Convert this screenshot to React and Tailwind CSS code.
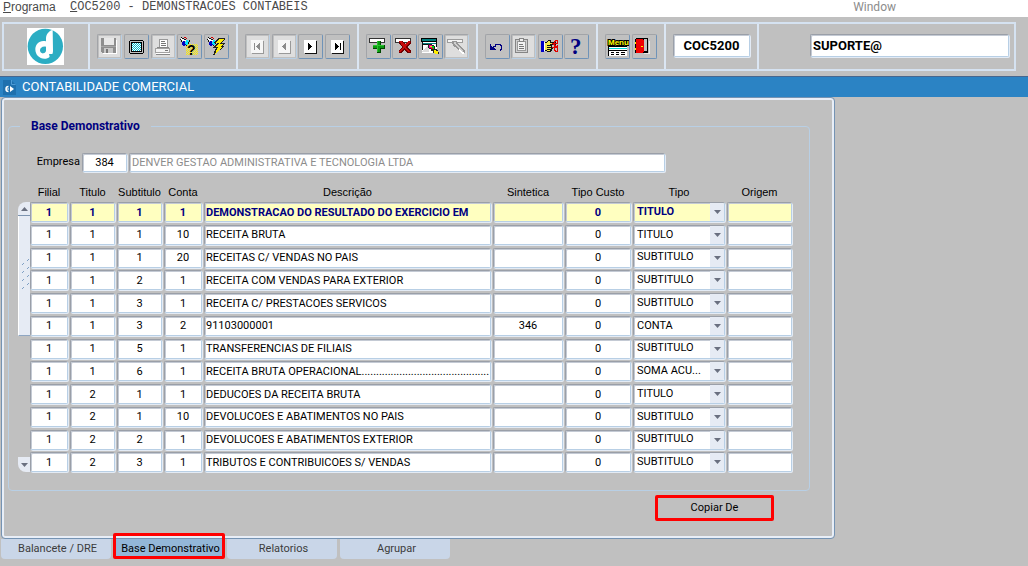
import React, { useState } from "react";

const rows = [
  ["1", "1", "1", "1", "DEMONSTRACAO DO RESULTADO DO EXERCICIO EM", "", "0", "TITULO", ""],
  ["1", "1", "1", "10", "RECEITA BRUTA", "", "0", "TITULO", ""],
  ["1", "1", "1", "20", "RECEITAS C/ VENDAS NO PAIS", "", "0", "SUBTITULO", ""],
  ["1", "1", "2", "1", "RECEITA COM VENDAS PARA EXTERIOR", "", "0", "SUBTITULO", ""],
  ["1", "1", "3", "1", "RECEITA C/ PRESTACOES SERVICOS", "", "0", "SUBTITULO", ""],
  ["1", "1", "3", "2", "91103000001", "346", "0", "CONTA", ""],
  ["1", "1", "5", "1", "TRANSFERENCIAS DE FILIAIS", "", "0", "SUBTITULO", ""],
  ["1", "1", "6", "1", "RECEITA BRUTA OPERACIONAL................................................", "", "0", "SOMA ACU...", ""],
  ["1", "2", "1", "1", "DEDUCOES DA RECEITA BRUTA", "", "0", "TITULO", ""],
  ["1", "2", "1", "10", "DEVOLUCOES E ABATIMENTOS NO PAIS", "", "0", "SUBTITULO", ""],
  ["1", "2", "2", "1", "DEVOLUCOES E ABATIMENTOS EXTERIOR", "", "0", "SUBTITULO", ""],
  ["1", "2", "3", "1", "TRIBUTOS E CONTRIBUICOES S/ VENDAS", "", "0", "SUBTITULO", ""],
];

const columns = [
  { name: "Filial", width: "w-[40px]" },
  { name: "Titulo", width: "w-[47px]" },
  { name: "Subtitulo", width: "w-[47px]" },
  { name: "Conta", width: "w-[40px]" },
  { name: "Descrição", width: "" },
  { name: "Sintetica", width: "w-[72px]" },
  { name: "Tipo Custo", width: "w-[68px]" },
  { name: "Tipo", width: "w-[94px]" },
  { name: "Origem", width: "w-[67px]" },
];

const field =
  "block w-full min-w-0 rounded-[2px] border border-t-[#9a9fa8] border-l-[#9a9fa8] border-r-[#b8cfe5] border-b-[#b8cfe5] shadow-[1px_1px_0_#e3ebf5,inset_1px_1px_0_#c4cad4] outline-none";

function Glyph({ children }) {
  return (
    <svg viewBox="0 0 24 25" width="24" height="25" shapeRendering="crispEdges" aria-hidden="true" className="block">
      {children}
    </svg>
  );
}

const Shade = () => <rect x="2" y="2" width="21" height="21" fill="#dedede" />;

const SaveIcon = () => (
  <Glyph>
    <Shade />
    <path d="M4 4h15v15h-14l-1-1z" fill="#8e8e8e" />
    <rect x="7" y="4" width="10" height="7" fill="#e8e8e8" />
    <rect x="4" y="12" width="15" height="1" fill="#a6a6a6" />
    <rect x="7" y="14" width="9" height="5" fill="#c9c9c9" />
    <rect x="9" y="15" width="2" height="4" fill="#777" />
    <path d="M6 19.500h13.500v-13.500" fill="none" stroke="#fff" />
  </Glyph>
);

const ScreenIcon = () => (
  <Glyph>
    <path d="M6 6h13v1h1v12h-1v1h-13v-1h-1v-12h1z" fill="#000" />
    <rect x="6" y="7" width="13" height="12" fill="#c0c0c0" />
    <rect x="7" y="8" width="11" height="10" fill="#000" />
    <rect x="8" y="9" width="9" height="8" fill="#fff" />
    {[0, 1, 2, 3, 4, 5, 6, 7].map((r) => (
      <path key={r} d={`M${8 + (r % 2)} ${9.5 + r}h${9 - (r % 2)}`} stroke="#00b6c8" strokeDasharray="1 1" />
    ))}
  </Glyph>
);

const PrinterIcon = () => (
  <Glyph>
    <Shade />
    <path d="M8.500 5.500h8v8h-8z" fill="#fff" stroke="#999" />
    <path d="M10 7.500h4M10 9.500h5M10 11.500h5" stroke="#777" />
    <path d="M4.500 14.500h14v4h-14z" fill="#f4f4f4" stroke="#a2a2a2" />
    <path d="M6 13.500h12M5 20.500h14" stroke="#888" />
    <path d="M5 19.500h14" stroke="#fff" />
    <path d="M14 16.500h3" stroke="#777" />
  </Glyph>
);

const Torch = () => (
  <>
    <path d="M4 4h2v1h2v1h1v1h-1v2h-1v-1h-1v-1h-1v-1h-1z" fill="#fff" />
    <path d="M4 3h1v1h-1zM5 4h2v1h-2zM7 5h2v1h-2zM3 5h1v1h-1zM4 6h1v2h-1zM12 6h1v2h-1zM13 8h-1v2h-1v1h-1v1h-1v-1h1v-1h1v-3h1z" fill="#111" />
    <path d="M5 8h1v-1h2v1h1v3h-1v1h-2v-1h-1z" fill="#0000c0" />
    <path d="M9 6h2v1h1v1h-1v3h-2v-1h-1v-2h1z" fill="#00e5ff" />
    <path d="M7 3h2v1h1v1h-1v-1h-2z" fill="#d00000" />
  </>
);

const QueryIcon = () => (
  <Glyph>
    {[0, 1, 2, 3, 4, 5, 6, 7, 8, 9, 10].map((r) => (
      <path key={r} d={`M${9 + (r % 2)} ${10.5 + r}h11`} stroke="#ffee00" strokeDasharray="1 1" />
    ))}
    <Torch />
    <text x="10" y="21" fontFamily="Liberation Sans" fontSize="14" fontWeight="700" fill="#000">
      ?
    </text>
  </Glyph>
);

const ExecuteIcon = () => (
  <Glyph>
    <Torch />
    <path d="M14 4h7v1l-3 4h3v1l-3 2h2v1l-4 3-6 5h-1l3-7h-3v-1l4-4h-3v-1z" fill="#222" />
    <path d="M15 5h5l-4 5h4l-4 3h3l-8 7 3-7h-3l4-4h-3z" fill="#ffee00" />
  </Glyph>
);

function NavIcon({ off, children }) {
  return (
    <Glyph>
      {off && <Shade />}
      <rect x="7" y="7" width="12" height="13" fill={off ? "#999" : "#111"} />
      <rect x="6" y="6" width="12" height="13" fill={off ? "#f6f6f6" : "#fff"} />
      <g fill={off ? "#8b8b8b" : "#000"}>{children}</g>
    </Glyph>
  );
}

const FirstIcon = () => (
  <NavIcon off>
    <path d="M9 9h1v7h-1zM15 9v7h-1v-1h-1v-1h-1v-1h-1v-1h1v-1h1v-1h1v-1z" />
  </NavIcon>
);
const PrevIcon = () => (
  <NavIcon off>
    <path d="M14 9v7h-1v-1h-1v-1h-1v-1h-1v-1h1v-1h1v-1h1v-1z" />
  </NavIcon>
);
const NextIcon = () => (
  <NavIcon>
    <path d="M10 9v7h1v-1h1v-1h1v-1h1v-1h-1v-1h-1v-1h-1v-1z" />
  </NavIcon>
);
const LastIcon = () => (
  <NavIcon>
    <path d="M15 9h1v7h-1zM10 9v7h1v-1h1v-1h1v-1h1v-1h-1v-1h-1v-1h-1v-1z" />
  </NavIcon>
);

const AddIcon = () => (
  <Glyph>
    <rect x="3.500" y="4.500" width="15" height="4" fill="#fff" stroke="#333" />
    <path d="M11 7h4v4h4v4h-4v4h-4v-4h-4v-4h4z" fill="#004800" />
    <path d="M11 7h3v4h4v3h-4v4h-3v-4h-4v-3h4z" fill="#0b9a12" />
    <path d="M11.500 7v11M7 11.500h11" stroke="#2bc32f" />
  </Glyph>
);

const RemoveIcon = () => (
  <Glyph>
    <rect x="3.500" y="4.500" width="15" height="4" fill="#fff" stroke="#333" />
    <path d="M7 7h4l2 3 3-3h3v2l-4 4 4 4v2h-4l-3-3-2 3h-3v-2l3-4-3-4z" fill="#6e0000" />
    <path d="M7 7h3l3 4 3-4h2v1l-4 5 4 5h-2l-4-4-3 4h-2v-1l4-4z" fill="#c80a0a" />
  </Glyph>
);

const ClearIcon = () => (
  <Glyph>
    <rect x="4" y="5" width="15" height="14" fill="#fff" />
    <path d="M3 4h16v4h-16z" fill="#000" />
    <path d="M4 5h14v2h-14z" fill="#007f7f" />
    <path d="M5 9h14v1h-14z" fill="#007f7f" />
    <path d="M4 8h1v8h-1zM5 10h5v1h-5zM18 8h1v5h-1z" fill="#111" />
    <path d="M4 18l5-6h2v6z" fill="#dcdcdc" />
    <path d="M10 10h4v1h2v1h1v3h2v1h1v2h1v2h-4v-1h-2v-2h-2v-2h-2v-1h-1z" fill="#222" />
    <path d="M11 11h3v3h-3z" fill="#f00090" />
    <path d="M12 12h2v1h-2z" fill="#ffe000" />
    <path d="M14 12h2v3h-2z" fill="#00d020" />
    <path d="M13 14h2v1h-2z" fill="#e00000" />
    <path d="M16 16h2v1h2v3h-3v-1h-1z" fill="#ffee00" />
  </Glyph>
);

const EraseIcon = () => (
  <Glyph>
    <Shade />
    <rect x="3.500" y="5.500" width="15" height="3" fill="#f4f4f4" stroke="#9b9b9b" />
    <path d="M8 7h5v1h1v2h1v1h1v1h1v1h1v1h1v1h1v1h1v3h-1v1h-2v-1h-1v-1h-1v-1h-1v-1h-1v-1h-1v-1h-1v-1h-2v-1h-1z" fill="#969696" />
    <path d="M10 8h2v2h1v1h1v1h1v1h1v1h1v1h1v1h1v2h-1v-1h-1v-1h-1v-1h-1v-1h-1v-1h-1v-1h-1v-1h-1v-1h-1z" fill="#cfcfcf" />
    <path d="M15.500 15v1h1v1h1v1h2v1h-2" fill="none" stroke="#fff" />
  </Glyph>
);

const UndoIcon = () => (
  <Glyph>
    <path d="M5 10v6h6v-1h-1v-1h-1v-1h-2v-1h-1v-2z" fill="#000080" />
    <path d="M8.500 13v-1h1.500v-1.500h5v1h1.500v4h-1v1.500" fill="none" stroke="#000080" />
  </Glyph>
);

const PasteIcon = () => (
  <Glyph>
    <Shade />
    <rect x="4.500" y="5.500" width="12" height="13" rx="1" fill="#d0d0d0" stroke="#858585" />
    <rect x="6.500" y="7.500" width="8" height="9" fill="#f2f2f2" stroke="#999" />
    <path d="M8.500 4.500h4v3h-4z" fill="#efefef" stroke="#858585" />
    <path d="M8 10.500h4M8 12.500h5M8 14.500h5" stroke="#777" />
  </Glyph>
);

const PointIcon = () => (
  <Glyph>
    <path d="M3 7h3v11h-3z" fill="#0000c8" />
    <path d="M6 8h1v9h-1z" fill="#fff" />
    <path d="M7 8h2v-1h1v-1h3v2h5v3h-4v2h1v2h-1v2h-1v1h-4v-1h-2z" fill="#111" />
    <path d="M7 9h2v-1h1v-1h2v2h5v1h-5v1h-3v1h4v1h-4v1h4v1h-4v1h3v1h-3v-1h-2z" fill="#f4e94c" />
    <g fill="none" stroke="#e00000">
      <path d="M17.500 6.500h2v3h-3v-2h1zM16.500 13.500h3v4h-2v-1h-1zM14 9.500h1v1h1v1h1v1h2M14 13.500h2v-1h3v-2" />
    </g>
  </Glyph>
);

const HelpIcon = () => (
  <Glyph>
    <text x="6" y="20" fontFamily="Liberation Serif" fontSize="23" fontWeight="700" fill="#000080">
      ?
    </text>
  </Glyph>
);

const MenuIcon = () => (
  <Glyph>
    <text
      x="3"
      y="11"
      fontFamily="Liberation Sans"
      fontSize="8"
      fontWeight="700"
      fill="#ffff00"
      stroke="#000"
      strokeWidth="2"
      paintOrder="stroke"
    >
      Menu
    </text>
    <rect x="3" y="13" width="19" height="9" fill="#fff" />
    <path d="M3 14.500h19" stroke="#00d8d8" />
    <path d="M3 12.500h19M3.500 13v9M3 16.500h19" stroke="#000" fill="none" />
    <path d="M6 18.500h3M11 18.500h3M16 18.500h4M6 20.500h3M11 20.500h3M16 20.500h4" stroke="#000" />
  </Glyph>
);

const ExitIcon = () => (
  <Glyph>
    <rect x="4" y="4" width="12" height="15" fill="#000" />
    <path d="M12 5h3v12h-3z" fill="#c0c0c0" />
    <path d="M4 5h7v1h1v12h-1v1h-7z" fill="#f00000" />
    <path d="M3 8h1v2h-1zM3 14h1v2h-1z" fill="#ffee00" />
    <path d="M3 5h1v3h-1zM3 10h1v4h-1zM3 16h1v3h-1z" fill="#000" />
    <path d="M9 12h2v1h-2z" fill="#ffee00" />
    <path d="M12 19.500h5v-13" fill="none" stroke="#e8e8e8" />
  </Glyph>
);

const groups = [
  [
    ["Salvar", SaveIcon, true],
    ["Tela", ScreenIcon],
    ["Imprimir", PrinterIcon, true],
    ["Consultar", QueryIcon],
    ["Executar consulta", ExecuteIcon],
  ],
  [
    ["Primeiro", FirstIcon, true],
    ["Anterior", PrevIcon, true],
    ["Proximo", NextIcon],
    ["Ultimo", LastIcon],
  ],
  [
    ["Inserir", AddIcon],
    ["Remover", RemoveIcon],
    ["Limpar", ClearIcon],
    ["Apagar", EraseIcon, true],
  ],
  [
    ["Desfazer", UndoIcon],
    ["Colar", PasteIcon, true],
    ["Editar", PointIcon],
    ["Ajuda", HelpIcon],
  ],
  [
    ["Menu", MenuIcon],
    ["Sair", ExitIcon],
  ],
];

const groupWidth = ["w-[148px]", "w-[121px]", "w-[119px]", "w-[120px]", "w-[68px]"];

function ToolButton({ label, Icon, off }) {
  return (
    <button
      type="button"
      aria-label={label}
      disabled={off}
      className={`h-[25px] w-[25px] overflow-hidden rounded-[2px] border border-t-[#a2a4a8] border-l-[#a2a4a8] ${
        off ? "border-r-[#b8cfe5] border-b-[#b8cfe5]" : "border-r-[#6f93b8] border-b-[#6f93b8]"
      }`}
    >
      <span className="-m-px block">
        <Icon />
      </span>
    </button>
  );
}

const Divider = "border-r-2 border-r-[#dbe6f3]";

function Logo() {
  return (
    <svg viewBox="0 0 111 111" className="h-[37px] w-[37px]" role="img" aria-label="Logo">
      <rect width="111" height="111" fill="#fff" />
      <circle cx="55" cy="55" r="53" fill="#2cadc3" />
      <path
        d="M77 5C67 8 58 17 57 30v10C38 35 25 48 25 64c0 17 12 28 27 28 7 0 12-2 16-6l-2-8h10c2-4 2-7 2-12z"
        fill="#fff"
      />
      <path d="M57 56c-11-2-18 4-18 11 0 6 5 10 10 9 5-1 8-4 8-9z" fill="#2cadc3" />
    </svg>
  );
}

function Toolbar() {
  return (
    <header className="bg-[#c0c0c0] pt-[5px] pr-3 pb-[5px] pl-[2px]">
      <div className="flex h-[49px] border-2 border-[#d5e2f1]">
        <div className={`flex w-[86px] shrink-0 items-center pl-[23px] ${Divider}`}>
          <Logo />
        </div>
        {groups.map((group, i) => (
          <div key={i} className={`flex shrink-0 items-start justify-between px-[7px] pt-[10px] ${groupWidth[i]} ${Divider}`}>
            {group.map(([label, Icon, off]) => (
              <ToolButton key={label} label={label} Icon={Icon} off={off} />
            ))}
          </div>
        ))}
        <div className={`flex w-[93px] shrink-0 items-start px-[7px] pt-[10px] ${Divider}`}>
          <input
            aria-label="Codigo do programa"
            defaultValue="COC5200"
            className={`h-[23px] bg-white text-center text-[13px] font-bold text-black ${field}`}
          />
        </div>
        <div className="flex min-w-0 flex-1 items-start pt-[10px] pr-[5px] pl-[51px]">
          <input
            aria-label="Usuario"
            defaultValue="SUPORTE@"
            className={`h-[23px] bg-white px-[2px] text-[13px] font-bold text-black ${field}`}
          />
        </div>
      </div>
    </header>
  );
}

function TipoSelect({ value, active, label }) {
  return (
    <div className={`relative h-[20px] overflow-hidden ${field} ${active ? "bg-[#ffffc0]" : "bg-white"}`}>
      <select
        aria-label={label}
        defaultValue={value}
        className={`block h-full w-full appearance-none bg-transparent pl-[3px] text-[11px] outline-none ${
          active ? "font-bold text-[#000080]" : "text-black"
        }`}
      >
        {["TITULO", "SUBTITULO", "CONTA", "SOMA ACU..."].map((o) => (
          <option key={o}>{o}</option>
        ))}
      </select>
      <span className="pointer-events-none absolute inset-y-0 right-0 flex w-[14px] items-center justify-center bg-[#e6ebf4]">
        <svg viewBox="0 0 7 4" width="7" height="4" aria-hidden="true">
          <path d="M0 0h7L3.500 4z" fill="#6a7080" />
        </svg>
      </span>
    </div>
  );
}

function DataTable() {
  return (
    <table className="w-full table-fixed border-collapse text-[11px]">
      <thead>
        <tr className="h-[22px]">
          {columns.map((c) => (
            <th
              key={c.name}
              scope="col"
              className={`p-0 pt-[2px] pr-[2px] align-middle font-['Liberation_Sans',Arial,sans-serif] font-normal whitespace-nowrap ${c.width}`}
            >
              {c.name}
            </th>
          ))}
        </tr>
      </thead>
      <tbody className="h-[273px]">
        {rows.map((row, r) => (
          <tr key={r}>
            {row.map((value, c) => {
              const label = `${columns[c].name} ${r + 1}`;
              return (
                <td key={c} className="p-0 pr-[2px] align-top">
                  {c === 7 ? (
                    <TipoSelect value={value} active={r === 0} label={label} />
                  ) : (
                    <input
                      aria-label={label}
                      defaultValue={value}
                      className={`h-[20px] px-px ${field} ${c === 4 ? "text-left" : "text-center"} ${
                        r === 0 ? "bg-[#ffffc0] font-bold text-[#000080]" : "bg-white text-black"
                      }`}
                    />
                  )}
                </td>
              );
            })}
          </tr>
        ))}
      </tbody>
    </table>
  );
}

function ScrollBar() {
  return (
    <div className="mt-[22px] mb-[3px] flex w-[12px] shrink-0 flex-col">
      <button
        type="button"
        aria-label="Rolar para cima"
        className="flex h-[14px] items-center justify-center rounded-tl-lg border-b border-[#7d94b0] bg-[#e6ebf4]"
      >
        <svg viewBox="0 0 7 4" width="7" height="4" aria-hidden="true">
          <path d="M0 4h7L3.500 0z" fill="#6a7080" />
        </svg>
      </button>
      <div className="flex h-[120px] items-center justify-end border-b border-l border-b-[#8fa6c2] border-l-white bg-[#e6ebf4]">
        <svg viewBox="0 0 8 36" width="8" height="36" aria-hidden="true">
          {[0, 8, 16, 24].map((y) => (
            <path key={y} d={`M0 ${y + 7}l2-2M5 ${y + 3}l2-2`} stroke="#7f9fc4" />
          ))}
        </svg>
      </div>
      <div className="flex-1" />
      <button
        type="button"
        aria-label="Rolar para baixo"
        className="flex h-[15px] items-center justify-center rounded-bl-lg bg-[#e6ebf4]"
      >
        <svg viewBox="0 0 7 4" width="7" height="4" aria-hidden="true">
          <path d="M0 0h7L3.500 4z" fill="#6a7080" />
        </svg>
      </button>
    </div>
  );
}

const tabs = ["Balancete / DRE", "Base Demonstrativo", "Relatorios", "Agrupar"];

export default function App() {
  const [tab, setTab] = useState(1);
  return (
    <div className="min-h-screen overflow-hidden bg-[#c0c0c0] font-[Roboto,Arial,sans-serif] text-[11px] text-black">
      <nav className="flex h-[17px] items-start bg-white pl-[3px] text-[12px] leading-[14px] text-[#4a4a4a]">
        <a href="#programa" className="w-[67px] font-['Liberation_Sans',Arial,sans-serif]">
          <span className="underline">P</span>rograma
        </a>
        <span className="font-['Liberation_Mono',monospace] whitespace-pre">
          <span className="underline">C</span>OC5200 - DEMONSTRACOES CONTABEIS
        </span>
        <a href="#window" className="mr-[132px] ml-auto text-[#8c8c8c]">
          Window
        </a>
      </nav>
      <Toolbar />
      <div className="flex h-[21px] items-center border-t border-[#47678f] bg-[#2b83c4] pl-[3px]">
        <svg viewBox="0 0 13 16" width="13" height="16" aria-hidden="true">
          <path d="M0 1h8l5 5v10H0z" fill="#1f70ae" />
          <path d="M8.500 1v4.500h4" fill="none" stroke="#4d9bd6" />
          <path d="M5.500 7.500a2.500 2.500 0 1 0 0 5" fill="none" stroke="#fff" strokeWidth="1.500" />
          <path d="M7 7l4 3-4 3z" fill="#fff" />
          <path d="M3 10h3" stroke="#fff" />
        </svg>
        <h1 className="ml-[6px] text-[13px] text-white">CONTABILIDADE COMERCIAL</h1>
      </div>
      <div className="mr-[193px] ml-px">
        <main className="rounded-sm border border-[#7593b3] shadow-[inset_0_0_0_2px_#e8eef7]">
          <div className="px-[6px] pt-[21px] pb-[17px]">
            <fieldset className="mr-[18px] min-w-0 rounded-[4px] border border-[#b8cfe5] pr-[15px] pb-[15px] pl-[9px]">
              <legend className="ml-[2px] px-[11px] text-[12px] leading-[14px] font-bold text-[#000080]">
                Base Demonstrativo
              </legend>
              <div className="mt-[20px] flex items-center">
                <label htmlFor="empresa" className="w-[64px] pr-[2px] text-right">
                  Empresa
                </label>
                <div className="mr-[2px] w-[45px] shrink-0">
                  <input id="empresa" defaultValue="384" className={`h-[19px] bg-white text-center ${field}`} />
                </div>
                <div className="mr-[129px] min-w-0 flex-1">
                  <input
                    aria-label="Nome da empresa"
                    readOnly
                    defaultValue="DENVER GESTAO ADMINISTRATIVA E TECNOLOGIA LTDA"
                    className={`h-[19px] bg-white px-[2px] text-[#8c8c8c] ${field}`}
                  />
                </div>
              </div>
              <div className="mt-[8px] flex">
                <ScrollBar />
                <div className="min-w-0 flex-1">
                  <DataTable />
                </div>
              </div>
            </fieldset>
            <div className="mt-[4px] mr-[54px] flex justify-end">
              <button type="button" className="h-[26px] w-[119px] rounded-[2px] border-3 border-[#ff0000]">
                Copiar De
              </button>
            </div>
          </div>
        </main>
        <div role="tablist" className="flex gap-[3px]">
          {tabs.map((name, i) => (
            <button
              key={name}
              type="button"
              role="tab"
              aria-selected={tab === i}
              onClick={() => setTab(i)}
              className={`relative h-[20px] w-[110px] rounded-b-[4px] pl-[3px] ${
                tab === i ? "bg-[#93b7d8] text-black" : "bg-[#c9d6e8] text-[#3c3c3c]"
              }`}
            >
              {name}
              {i === 1 && <span className="absolute -inset-x-px -top-[6px] bottom-0 rounded-[2px] border-3 border-[#ff0000]" />}
            </button>
          ))}
        </div>
      </div>
    </div>
  );
}
